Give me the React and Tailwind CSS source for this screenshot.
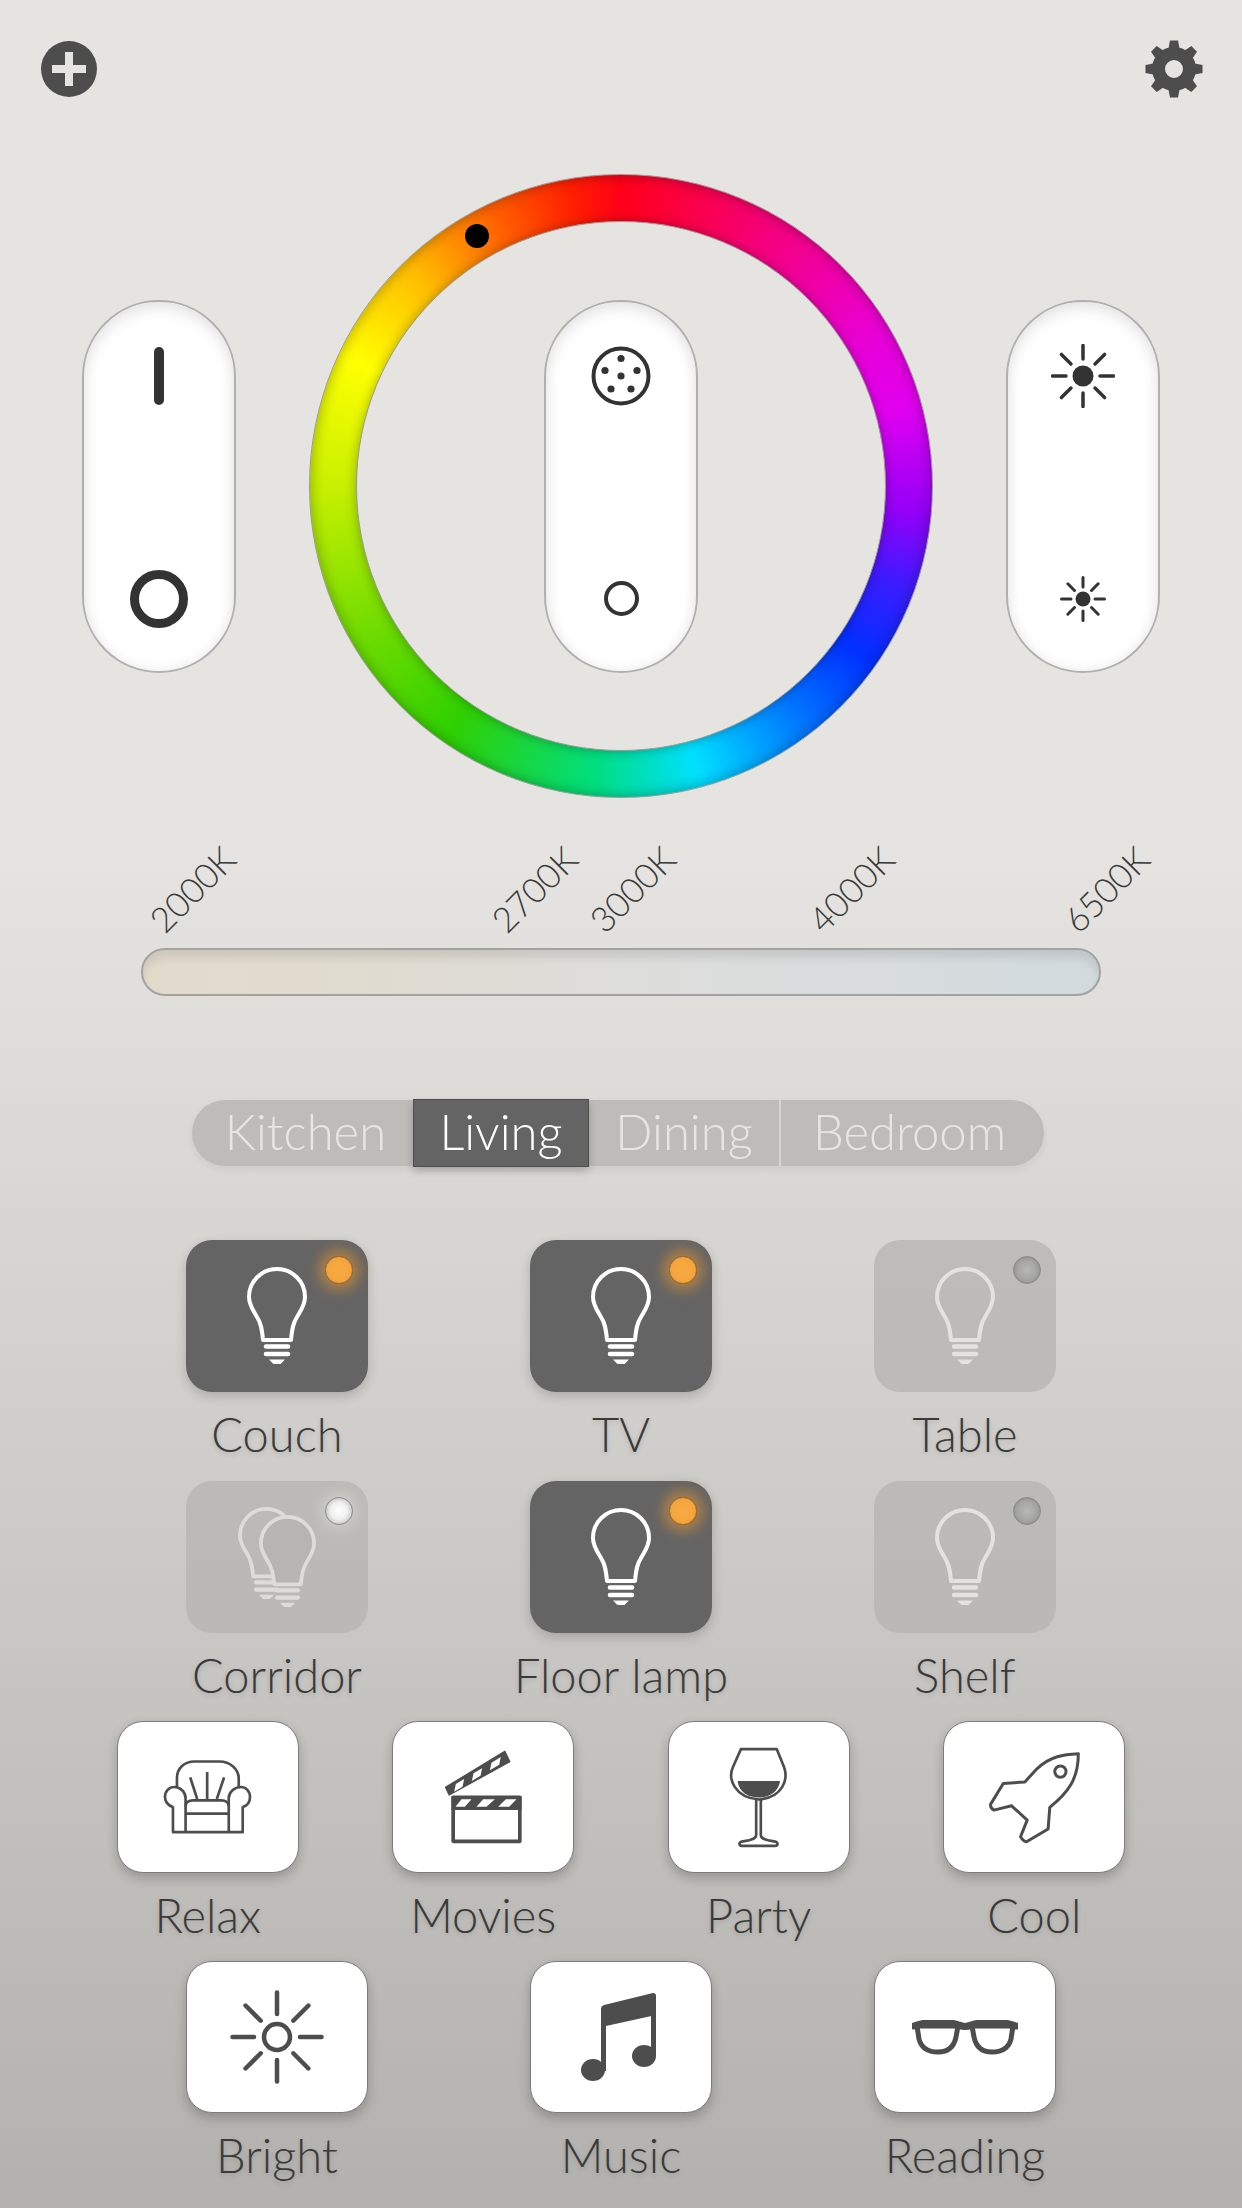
const dark = '#4d4d4d';

function PlusIcon() {
  return (
    <svg width="56" height="56" viewBox="0 0 56 56">
      <circle cx="28" cy="28" r="28" fill={dark} />
      <rect x="11" y="24" width="34" height="8" fill="#e5e4e0" />
      <rect x="24" y="11" width="8" height="34" fill="#e5e4e0" />
    </svg>
  );
}

function GearIcon() {
  const angles = [0, 45, 90, 135, 180, 225, 270, 315];
  return (
    <svg width="58" height="58" viewBox="0 0 58 58">
      <circle cx="29" cy="29" r="15.5" fill="none" stroke={dark} strokeWidth="13" />
      {angles.map((a) => (
        <path key={a} d="M23 11 L25 0.5 H33 L35 11 Z" fill={dark} transform={`rotate(${a} 29 29)`} />
      ))}
    </svg>
  );
}

function SunIcon({ size, core, inner, width }) {
  const angles = [0, 45, 90, 135, 180, 225, 270, 315];
  const c = size / 2;
  return (
    <svg width={size} height={size} viewBox={`0 0 ${size} ${size}`}>
      <circle cx={c} cy={c} r={core} fill="#333" />
      {angles.map((a) => (
        <line key={a} x1={c} y1={c - inner} x2={c} y2={1.5} stroke="#333" strokeWidth={width} strokeLinecap="round" transform={`rotate(${a} ${c} ${c})`} />
      ))}
    </svg>
  );
}

function DotsIcon() {
  const dots = [[0, 0], [0, -17.5], [-16, -5.5], [16, -5.5], [-10, 13], [10, 13]];
  return (
    <svg width="60" height="60" viewBox="-30 -30 60 60">
      <circle r="27.5" fill="none" stroke="#333" strokeWidth="4" />
      {dots.map(([x, y]) => (
        <circle key={`${x}-${y}`} cx={x} cy={y} r="3.6" fill="#333" />
      ))}
    </svg>
  );
}

function Pill({ top, bottom }) {
  return (
    <div className="flex h-[373px] w-[154px] shrink-0 flex-col items-center justify-between rounded-full border-2 border-[#b0b0ae] bg-white pt-[42px] pb-[40px] shadow-[inset_0_8px_16px_rgba(0,0,0,0.07),inset_0_0_14px_rgba(0,0,0,0.07)]">
      <div className="flex h-[64px] w-[64px] items-center justify-center">{top}</div>
      <div className="flex h-[64px] w-[64px] items-center justify-center">{bottom}</div>
    </div>
  );
}

function ColorWheel() {
  return (
    <div className="relative flex h-[624px] w-[624px] shrink-0 items-center justify-center rounded-full border border-[#9a9a98] bg-[conic-gradient(#ff0018_0deg,#f5007c_30deg,#e800d8_60deg,#e000f0_75deg,#9400f8_95deg,#3a1cff_110deg,#0030ff_125deg,#0080ff_145deg,#00e0ff_165deg,#00de80_185deg,#30d000_215deg,#70dc00_240deg,#c8f000_270deg,#ffff00_295deg,#ffc000_315deg,#ff6000_335deg,#ff2000_350deg,#ff0018_360deg)] shadow-[inset_0_0_14px_rgba(0,0,0,0.32)]">
      <div className="flex h-[530px] w-[530px] items-center justify-center rounded-full border border-[#9a9a98] bg-[#e5e4e0] shadow-[0_0_12px_rgba(0,0,0,0.3)]">
        <Pill
          top={<DotsIcon />}
          bottom={<div className="h-[35px] w-[35px] rounded-full border-4 border-[#333]" />}
        />
      </div>
      <div className="absolute top-[49px] left-[155px] h-[24px] w-[24px] rounded-full bg-black" />
    </div>
  );
}

const kelvins = [
  { text: '2000K', pos: 'left-[49px]' },
  { text: '2700K', pos: 'left-[391px]' },
  { text: '3000K', pos: 'left-[489px]' },
  { text: '4000K', pos: 'left-[708px]' },
  { text: '6500K', pos: 'left-[963px]' },
];

function Bulb({ color = 'white', fill = 'none', width = 60, height = 98 }) {
  return (
    <svg width={width} height={height} viewBox="0 0 60 98">
      <path
        d="M16 73 H44 C45 62 46 56 50 50 C54 43 58 38 58 30 C58 14 45 2 30 2 C15 2 2 14 2 30 C2 38 6 43 10 50 C14 56 15 62 16 73 Z"
        fill={fill}
        stroke={color}
        strokeWidth="4"
        strokeLinejoin="round"
      />
      <line x1="19" y1="79.5" x2="41" y2="79.5" stroke={color} strokeWidth="4.5" strokeLinecap="round" />
      <line x1="19" y1="87" x2="41" y2="87" stroke={color} strokeWidth="4.5" strokeLinecap="round" />
      <path d="M22 92.5 H38 L33.5 97 H26.5 Z" fill={color} />
    </svg>
  );
}

function DoubleBulb() {
  return (
    <div className="relative h-[100px] w-[78px]">
      <div className="absolute top-0 left-0">
        <Bulb color="#dcdcda" width={57} height={93} />
      </div>
      <div className="absolute top-[8px] left-[21px]">
        <Bulb color="#dcdcda" fill="#b6b5b2" width={57} height={93} />
      </div>
    </div>
  );
}

function Led({ state }) {
  const styles = {
    on: 'border-[#a8702c] bg-[radial-gradient(circle,#f8aa42_0%,#f6a53e_60%,#e4962f_100%)] shadow-[0_0_14px_6px_rgba(230,150,50,0.6)]',
    off: 'border-[#8a8a88] bg-[radial-gradient(circle,#b8b8b6_0%,#a4a4a2_55%,#7c7c7a_100%)]',
    white: 'border-[#8e8e8c] bg-[radial-gradient(circle,#ffffff_0%,#f0f0f0_45%,#a8a8a6_100%)] shadow-[0_0_14px_4px_rgba(255,255,255,0.3)]',
  };
  return <div className={`absolute top-[16px] right-[15px] h-[28px] w-[28px] rounded-full border ${styles[state]}`} />;
}

const lights = [
  [
    { name: 'Couch', on: true },
    { name: 'TV', on: true },
    { name: 'Table', on: false, led: 'off' },
  ],
  [
    { name: 'Corridor', on: false, led: 'white', group: true },
    { name: 'Floor lamp', on: true },
    { name: 'Shelf', on: false, led: 'off' },
  ],
];

function LightCell({ light }) {
  return (
    <div className="flex h-[241px] w-[344px] flex-col items-center">
      <div
        className={
          light.on
            ? 'relative flex h-[152px] w-[182px] items-center justify-center rounded-[26px] bg-[#646464] shadow-[0_4px_12px_rgba(0,0,0,0.18)]'
            : 'relative flex h-[152px] w-[182px] items-center justify-center rounded-[26px] bg-[#b6b5b2]/80'
        }
      >
        {light.group ? <DoubleBulb /> : <Bulb color={light.on ? 'white' : '#e2e2e0'} />}
        <Led state={light.on ? 'on' : light.led} />
      </div>
      <div className="mt-[15px] text-[47px] leading-[54px] font-light whitespace-nowrap text-[#3a3a3a] [text-shadow:0_2px_5px_rgba(0,0,0,0.14)]">
        {light.name}
      </div>
    </div>
  );
}

function RelaxIcon() {
  return (
    <svg width="89" height="76" viewBox="190 148 268 228" fill="none" stroke={dark} strokeWidth="8" strokeLinejoin="round">
      <path d="M232 235 V205 C232 175 255 155 285 155 H360 C392 155 418 178 418 205 V235" />
      <path d="M220 292 C205 288 196 275 196 262 C196 245 208 232 224 232 C242 232 258 247 258 265 V368" />
      <path d="M430 292 C445 288 452 275 452 262 C452 245 440 232 424 232 C406 232 388 247 388 265 V368" />
      <path d="M220 290 V368 H430 V290" />
      <path d="M258 312 H388" />
      <path d="M258 290 C258 278 268 272 280 272 H366 C378 272 388 278 388 290" />
      <path d="M323 187 V268 M272 203 L293 268 M374 203 L352 268" />
    </svg>
  );
}

function MoviesIcon() {
  return (
    <svg width="79" height="94" viewBox="1033 120 236 282">
      <rect x="1060" y="262" width="200" height="132" fill="white" stroke={dark} strokeWidth="11" strokeLinejoin="round" />
      <rect x="1055" y="258" width="210" height="42" fill={dark} />
      <path d="M1085 268 H1115 L1095 290 H1067 Z M1150 268 H1185 L1160 290 H1130 Z M1218 268 H1250 L1228 290 H1195 Z" fill="white" />
      <path d="M1037 232 L1215 124 L1230 155 L1048 255 Z" fill={dark} stroke={dark} strokeWidth="4" strokeLinejoin="round" />
      <path d="M1068 222 L1093 207 L1088 230 L1063 245 Z M1121 190 L1147 175 L1142 197 L1116 213 Z M1175 158 L1203 141 L1198 164 L1170 181 Z" fill="white" />
    </svg>
  );
}

function PartyIcon() {
  return (
    <svg width="59" height="103" viewBox="266 108 178 308" fill="none" stroke={dark} strokeWidth="8" strokeLinejoin="round">
      <path d="M302 116 H410 L432 170 C445 205 430 262 356 268 C282 262 262 205 278 170 Z" />
      <path d="M348 268 V375 C348 390 320 392 305 395 C295 398 295 408 305 408 H405 C415 408 415 398 405 395 C390 392 362 390 362 375 V268" />
      <path d="M292 212 H420 C416 245 385 262 356 262 C325 262 295 245 292 212 Z" fill={dark} stroke="none" />
    </svg>
  );
}

function CoolIcon() {
  return (
    <svg width="93" height="93" viewBox="1044 120 280 280" fill="none" stroke={dark} strokeWidth="9" strokeLinejoin="round">
      <path d="M1316 128 C1275 130 1230 135 1190 175 L1155 213 L1090 218 L1052 280 Q1050 292 1062 298 L1115 285 L1162 328 L1142 378 Q1150 392 1160 393 L1225 355 L1230 290 C1285 245 1316 205 1316 128 Z" />
      <circle cx="1262" cy="182" r="17" />
    </svg>
  );
}

function BrightIcon() {
  const angles = [0, 45, 90, 135, 180, 225, 270, 315];
  return (
    <svg width="94" height="94" viewBox="-47 -47 94 94">
      <circle r="13" fill="none" stroke={dark} strokeWidth="4.5" />
      {angles.map((a) => (
        <line key={a} x1="0" y1="-23" x2="0" y2="-44.5" stroke={dark} strokeWidth="4.5" strokeLinecap="round" transform={`rotate(${a})`} />
      ))}
    </svg>
  );
}

function MusicIcon() {
  return (
    <svg className="mr-[5px]" width="75" height="88" viewBox="0 0 75 88" fill={dark}>
      <path d="M20 16 Q20 13 23 12 L72 0 Q75 0 75 3 V22 L25 33 V78 H20 Z" />
      <rect x="70" y="3" width="5" height="60" />
      <ellipse cx="12" cy="77" rx="12" ry="11" />
      <ellipse cx="63" cy="63" rx="12" ry="11" />
    </svg>
  );
}

function ReadingIcon() {
  return (
    <svg width="106" height="35" viewBox="0 0 106 35" fill="none" stroke={dark} strokeWidth="5" strokeLinejoin="round">
      <path d="M5 6 H46 L44 17 C42 27 36 32 26 32 C15 32 9 27 7 19 Z" />
      <path d="M101 6 H60 L62 17 C64 27 70 32 80 32 C91 32 97 27 99 19 Z" />
      <path d="M2 6 C15 1 35 1 47 5 Q53 8 59 5 C71 1 91 1 104 6" strokeWidth="7" strokeLinecap="round" />
    </svg>
  );
}

function SceneCell({ name, icon, width }) {
  return (
    <div className={`flex h-[241px] ${width} flex-col items-center`}>
      <div className="-mt-px flex h-[152px] w-[182px] items-center justify-center rounded-[26px] border border-[#7c7c7a] bg-white shadow-[0_5px_12px_rgba(0,0,0,0.22)]">
        {icon}
      </div>
      <div className="mt-[15px] text-[47px] leading-[54px] font-light whitespace-nowrap text-[#3a3a3a] [text-shadow:0_2px_5px_rgba(0,0,0,0.14)]">
        {name}
      </div>
    </div>
  );
}

export default function App() {
  return (
    <div className="h-[2208px] w-[1242px] overflow-hidden bg-[linear-gradient(#e5e4e0_0px,#e5e4e0_850px,#b2b1ad_2208px)] font-['Lato',sans-serif]">
      {/* Top bar */}
      <div className="flex h-[98px] items-center justify-between pt-[40px] pr-[39px] pl-[41px]">
        <PlusIcon />
        <GearIcon />
      </div>

      {/* Wheel and sliders */}
      <div className="mt-[76px] flex items-center justify-center gap-[73px]">
        <Pill
          top={<div className="h-[58px] w-[10px] rounded-full bg-[#333]" />}
          bottom={<div className="h-[58px] w-[58px] rounded-full border-[9px] border-[#333]" />}
        />
        <ColorWheel />
        <Pill
          top={<SunIcon size={64} core={10.5} inner={17} width={3.5} />}
          bottom={<SunIcon size={46} core={7.5} inner={12} width={3} />}
        />
      </div>

      {/* Colour temperature */}
      <div className="relative mt-[150px] ml-[141px] h-[48px] w-[960px] rounded-full border-2 border-[#a2a2a0] bg-[linear-gradient(90deg,#e2dbcc_0%,#e0dbd0_25%,#dddddb_50%,#dadddd_70%,#d2dade_100%)] shadow-[inset_0_8px_9px_rgba(0,0,0,0.09)]">
        {kelvins.map((k) => (
          <div
            key={k.text}
            className={`absolute top-[-61px] ${k.pos} -translate-x-1/2 -translate-y-1/2 -rotate-45 text-[35px] leading-none font-light whitespace-nowrap text-[#3a3a3a]`}
          >
            {k.text}
          </div>
        ))}
      </div>

      {/* Rooms */}
      <div className="mt-[104px] ml-[192px] flex h-[66px] w-[852px] rounded-full bg-[#bdbcb9] text-[49px] leading-none font-light text-[#e6e6e4] shadow-[0_3px_8px_rgba(0,0,0,0.06)]">
        <div className="flex w-[221px] items-center justify-center pb-[3px] pl-[6px]">Kitchen</div>
        <div className="-my-px flex w-[176px] items-center justify-center border border-[#4e4e4e] bg-[#646464] pb-[3px] text-white shadow-[0_4px_8px_rgba(0,0,0,0.2)]">Living</div>
        <div className="flex w-[192px] items-center justify-center border-r-2 border-[#d6d5d2] pb-[3px]">Dining</div>
        <div className="flex w-[263px] items-center justify-center pr-[6px] pb-[3px]">Bedroom</div>
      </div>

      {/* Lights */}
      <div className="mt-[74px]">
        {lights.map((row, i) => (
          <div key={i} className="flex justify-center">
            {row.map((light) => (
              <LightCell key={light.name} light={light} />
            ))}
          </div>
        ))}
      </div>

      {/* Scenes */}
      <div className="flex justify-center">
        <SceneCell name="Relax" icon={<RelaxIcon />} width="w-[275.5px]" />
        <SceneCell name="Movies" icon={<MoviesIcon />} width="w-[275.5px]" />
        <SceneCell name="Party" icon={<PartyIcon />} width="w-[275.5px]" />
        <SceneCell name="Cool" icon={<CoolIcon />} width="w-[275.5px]" />
      </div>
      <div className="-mt-px flex justify-center">
        <SceneCell name="Bright" icon={<BrightIcon />} width="w-[344px]" />
        <SceneCell name="Music" icon={<MusicIcon />} width="w-[344px]" />
        <SceneCell name="Reading" icon={<ReadingIcon />} width="w-[344px]" />
      </div>
    </div>
  );
}
